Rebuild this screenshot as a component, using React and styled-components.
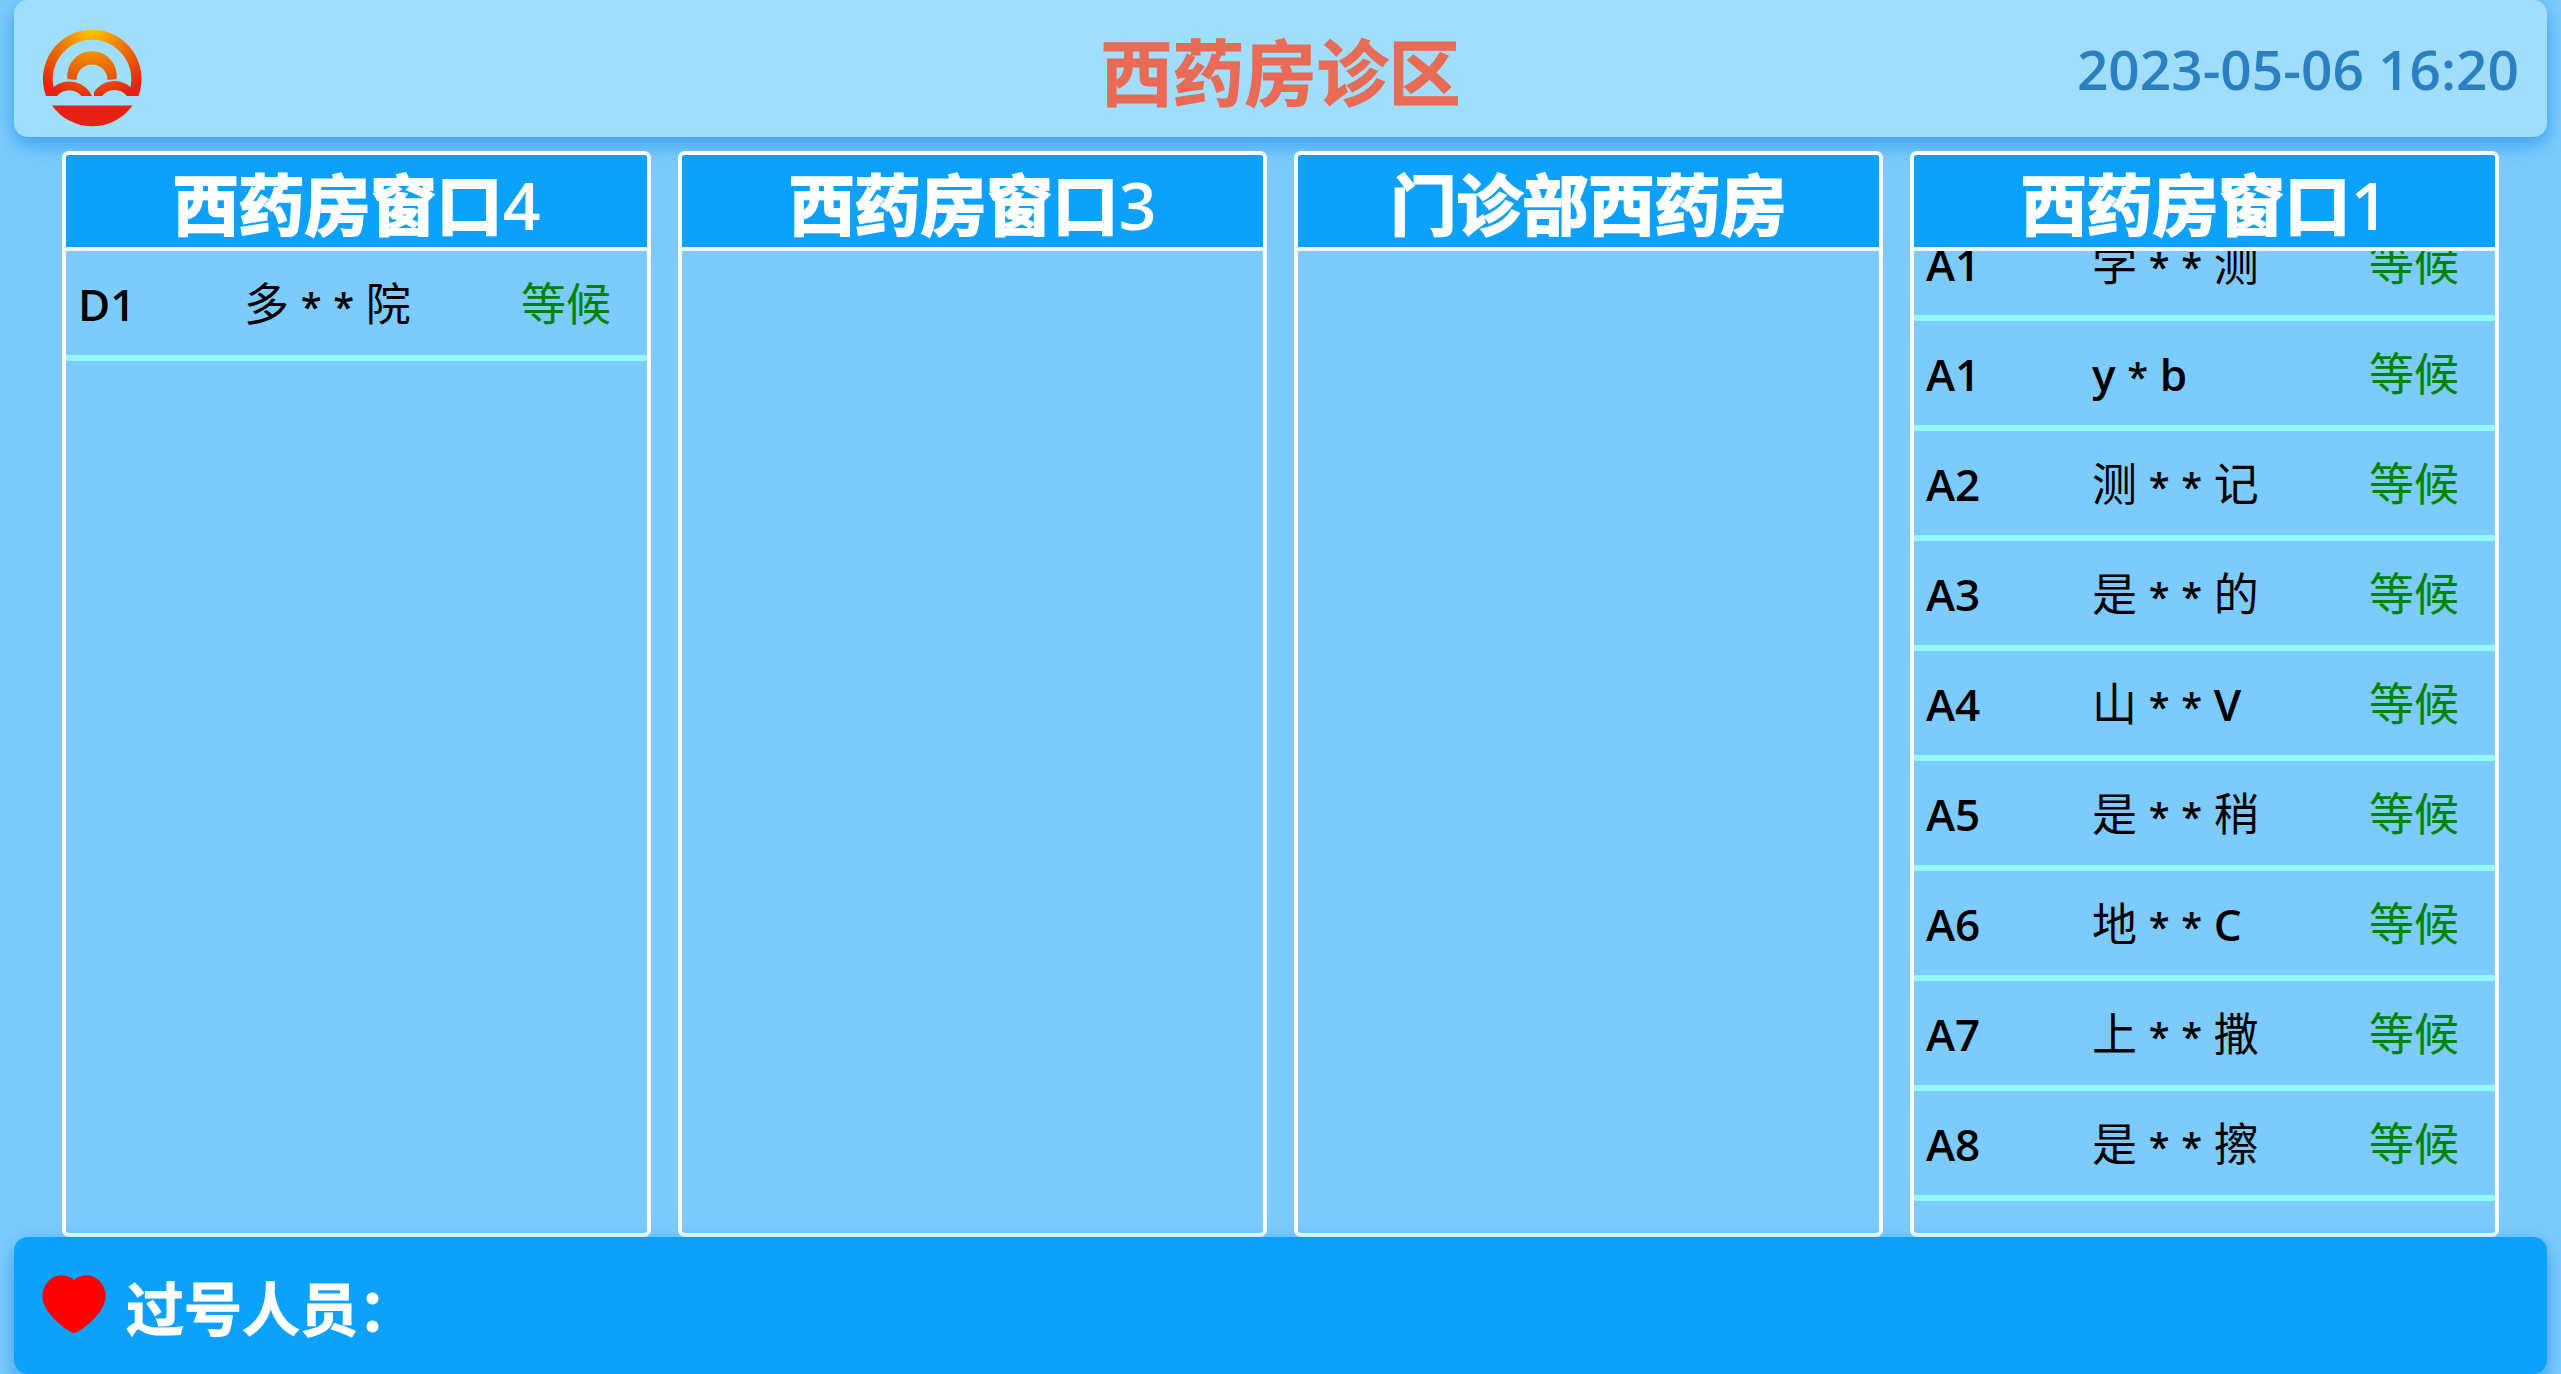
import React from "react";
import styled, { createGlobalStyle } from "styled-components";

const latin = '"Open Sans", "Noto Sans CJK SC", sans-serif';
const cjk = '"Noto Sans CJK SC", sans-serif';

const GlobalStyle = createGlobalStyle`
  * { box-sizing: border-box; }
  body { margin: 0; background: #7dcafc; font-family: ${latin}; }
`;

const Page = styled.div`
  height: 100vh;
  display: flex;
  flex-direction: column;
  padding: 0 14px;
  overflow: hidden;
`;

const Header = styled.header`
  flex: none;
  height: 137px;
  display: grid;
  grid-template-columns: 1fr auto 1fr;
  align-items: center;
  padding: 0 28px;
  border-radius: 14px;
  background: #a1defb;
  box-shadow: 0 8px 20px #35a1ed;
`;

const Logo = styled.svg`
  display: block;
  width: 100px;
  height: 100px;
  margin-top: 20px;
`;

const AreaTitle = styled.h1`
  margin: 0;
  color: #e96b55;
  font: 700 72px/104px ${cjk};
  -webkit-text-stroke: 1px currentColor;
`;

const Clock = styled.time`
  justify-self: end;
  color: #2b80c2;
  font-size: 55px;
  font-weight: 600;
  line-height: 76px;
`;

const Board = styled.main`
  flex: 1;
  min-height: 0;
  display: grid;
  grid-template-columns: repeat(4, minmax(0, 1fr));
  gap: 27px;
  padding: 14px 48px 0;
`;

const Panel = styled.section`
  min-height: 0;
  display: flex;
  flex-direction: column;
  border: 4px solid #fff;
  border-radius: 7px;
  overflow: hidden;
`;

const PanelTitle = styled.h2`
  flex: none;
  margin: 0;
  height: 96px;
  border-bottom: 4px solid #fff;
  background: #0ca1fb;
  color: #fff;
  text-align: center;
  font: 700 66px/92px ${cjk};
  -webkit-text-stroke: 2px currentColor;
`;

const PanelNumber = styled.span`
  font-family: ${latin};
  font-weight: 600;
  -webkit-text-stroke: 0;
`;

const Queue = styled.ul`
  flex: 1;
  min-height: 0;
  margin: 0;
  padding: 0;
  list-style: none;
  overflow: hidden;
`;

const Patient = styled.li`
  display: grid;
  grid-template-columns: 166fr 277fr 114fr;
  align-items: center;
  height: 110px;
  padding: 2px 12px 0 12px;
  border-bottom: 6px solid #95f8f9;
  font-size: 45px;
  line-height: 64px;
  white-space: nowrap;

  ${Queue}[data-scrolled="true"] &:first-child {
    margin-top: -40px;
  }
`;

const Code = styled.span`
  font-size: 44px;
  font-weight: 600;
`;

const Letter = styled.span`
  font-size: 44px;
  font-weight: 600;
`;

const Mask = styled.span`
  font-size: 38px;
  font-weight: 600;
  line-height: 1;
`;

const Status = styled.span`
  color: #008400;
`;

const Footer = styled.footer`
  flex: none;
  height: 137px;
  display: flex;
  align-items: center;
  gap: 20px;
  padding: 0 28px;
  border-radius: 14px;
  background: #0ca1fb;
  color: #fff;
  box-shadow: 0 8px 20px #35a1ed;
`;

const Heart = styled.svg`
  flex: none;
  width: 64px;
  height: 58px;
  margin-bottom: 4px;
`;

const Missed = styled.strong`
  font: 700 58px/86px ${cjk};
  -webkit-text-stroke: 1px currentColor;
`;

const panels = [
  { name: "西药房窗口", number: "4", patients: [["D1", "多 * * 院"]] },
  { name: "西药房窗口", number: "3", patients: [] },
  { name: "门诊部西药房", number: "", patients: [] },
  {
    name: "西药房窗口",
    number: "1",
    scrolled: true,
    patients: [
      ["A1", "学 * * 测"],
      ["A1", "y * b"],
      ["A2", "测 * * 记"],
      ["A3", "是 * * 的"],
      ["A4", "山 * * V"],
      ["A5", "是 * * 稍"],
      ["A6", "地 * * C"],
      ["A7", "上 * * 撒"],
      ["A8", "是 * * 擦"],
    ],
  },
];

function MaskedName({ text }) {
  return (
    <span>
      {text.split(/([*A-Za-z])/).map((part, i) => {
        if (part === "*") return <Mask key={i}>*</Mask>;
        if (/[A-Za-z]/.test(part)) return <Letter key={i}>{part}</Letter>;
        return part;
      })}
    </span>
  );
}

function HospitalLogo() {
  return (
    <Logo viewBox="0 0 100 100" role="img" aria-label="logo">
      <defs>
        <radialGradient id="sun" gradientUnits="userSpaceOnUse" cx="50" cy="0" r="72">
          <stop offset="0" stopColor="#fccb00" />
          <stop offset="0.4" stopColor="#f08200" />
          <stop offset="0.72" stopColor="#ea5504" />
          <stop offset="1" stopColor="#e72113" />
        </radialGradient>
      </defs>
      <g fill="url(#sun)">
        <path d="M4 67 A49.3 49.3 0 1 1 96.500 67 H85 A16 16 0 0 0 60 67 H52 V63 A24.500 24.500 0 0 1 88.500 58 A39.300 39.300 0 1 0 11.500 58 A25 25 0 0 1 50 67 H39.500 A16 16 0 0 0 15 67 Z" />
        <path d="M25.500 50 A24.700 24.700 0 1 1 74.500 50 L65.500 51 A15.500 15.500 0 1 0 34.500 51 Z" />
      </g>
      <path d="M10 76.500 H90.500 A49.300 49.300 0 0 1 10 76.500 Z" fill="#e72113" />
    </Logo>
  );
}

export default function App() {
  return (
    <>
      <GlobalStyle />
      <Page>
        <Header>
          <HospitalLogo />
          <AreaTitle>西药房诊区</AreaTitle>
          <Clock dateTime="2023-05-06T16:20">2023-05-06 16:20</Clock>
        </Header>
        <Board>
          {panels.map((panel) => (
            <Panel key={panel.name + panel.number}>
              <PanelTitle>
                {panel.name}
                {panel.number && <PanelNumber>{panel.number}</PanelNumber>}
              </PanelTitle>
              <Queue data-scrolled={panel.scrolled}>
                {panel.patients.map(([code, name], i) => (
                  <Patient key={i}>
                    <Code>{code}</Code>
                    <MaskedName text={name} />
                    <Status>等候</Status>
                  </Patient>
                ))}
              </Queue>
            </Panel>
          ))}
        </Board>
        <Footer>
          <Heart viewBox="0 0 64 58" aria-hidden="true">
            <path
              d="M32 5 C25 -1 15 -1 9 4 C2 9 -1 18 1 26 C4 38 18 51 29 57 Q32 59 35 57 C46 51 60 38 63 26 C65 18 62 9 55 4 C49 -1 39 -1 32 5 Z"
              fill="#f00"
            />
          </Heart>
          <Missed>过号人员：</Missed>
        </Footer>
      </Page>
    </>
  );
}
